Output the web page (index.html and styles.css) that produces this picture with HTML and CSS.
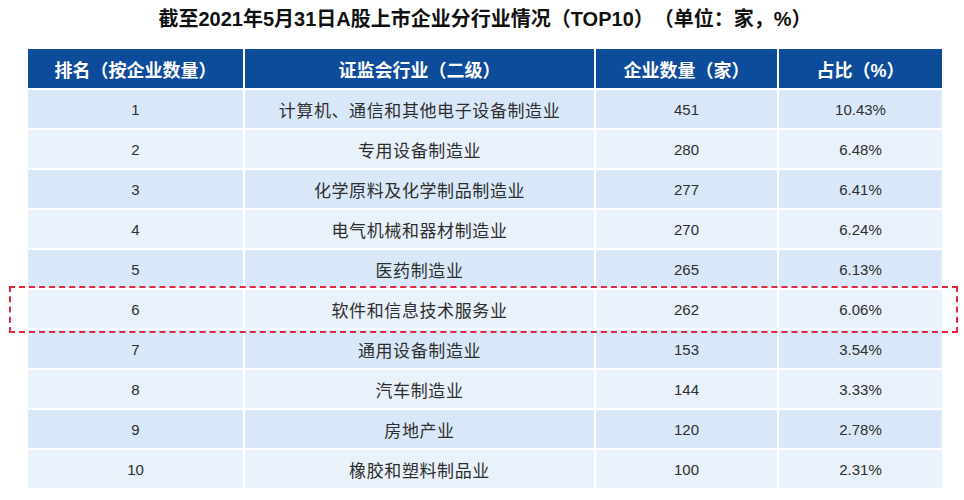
FILE: index.html
```html
<!DOCTYPE html>
<html lang="zh-CN">
<head>
<meta charset="utf-8">
<link rel="stylesheet" href="styles.css">
</head>
<body>
<div class="page">
  <h1 class="title">截至2021年5月31日A股上市企业分行业情况（TOP10）（单位：家，%）</h1>
  <table class="tbl">
    <colgroup>
      <col class="c1"><col class="c2"><col class="c3"><col class="c4">
    </colgroup>
    <thead>
      <tr><th>排名（按企业数量）</th><th>证监会行业（二级）</th><th>企业数量（家）</th><th>占比（%）</th></tr>
    </thead>
    <tbody>
      <tr><td class="num">1</td><td class="cn">计算机、通信和其他电子设备制造业</td><td class="num">451</td><td class="num">10.43%</td></tr>
      <tr><td class="num">2</td><td class="cn">专用设备制造业</td><td class="num">280</td><td class="num">6.48%</td></tr>
      <tr><td class="num">3</td><td class="cn">化学原料及化学制品制造业</td><td class="num">277</td><td class="num">6.41%</td></tr>
      <tr><td class="num">4</td><td class="cn">电气机械和器材制造业</td><td class="num">270</td><td class="num">6.24%</td></tr>
      <tr><td class="num">5</td><td class="cn">医药制造业</td><td class="num">265</td><td class="num">6.13%</td></tr>
      <tr><td class="num">6</td><td class="cn">软件和信息技术服务业</td><td class="num">262</td><td class="num">6.06%</td></tr>
      <tr><td class="num">7</td><td class="cn">通用设备制造业</td><td class="num">153</td><td class="num">3.54%</td></tr>
      <tr><td class="num">8</td><td class="cn">汽车制造业</td><td class="num">144</td><td class="num">3.33%</td></tr>
      <tr><td class="num">9</td><td class="cn">房地产业</td><td class="num">120</td><td class="num">2.78%</td></tr>
      <tr><td class="num">10</td><td class="cn">橡胶和塑料制品业</td><td class="num">100</td><td class="num">2.31%</td></tr>
    </tbody>
  </table>
  <div class="highlight"></div>
</div>
</body>
</html>
```
FILE: styles.css
```css
html, body {
  margin: 0;
  padding: 0;
  background: #ffffff;
}
body {
  font-family: "Liberation Sans", "Noto Sans CJK SC", sans-serif;
  color: #333333;
  text-spacing-trim: space-all;
}
.page {
  position: relative;
  width: 964px;
  height: 500px;
}
.title {
  margin: 0;
  height: 38px;
  line-height: 38px;
  text-align: center;
  font-size: 20px;
  font-weight: 700;
  color: #111111;
  padding-left: 6px;
}
.tbl {
  margin: 9px 0 0 26px;
  border-collapse: separate;
  border-spacing: 2px;
  table-layout: fixed;
  width: 918px;
}
.c1 { width: 215px; }
.c2 { width: 349px; }
.c3 { width: 181px; }
.c4 { width: 163px; }
.tbl th {
  height: 39px;
  padding: 0;
  background: #0d4c9a;
  color: #ffffff;
  font-size: 18px;
  font-weight: 700;
  text-align: center;
  vertical-align: middle;
}
.tbl td {
  height: 38px;
  padding: 0;
  text-align: center;
  vertical-align: middle;
}
.tbl tbody tr:nth-child(odd) td { background: #d9e8f8; }
.tbl tbody tr:nth-child(even) td { background: #e9f1fa; }
.num {
  font-size: 15px;
  color: #2e2e2e;
}
.cn {
  font-size: 17px;
  letter-spacing: 0.6px;
  color: #2e2e2e;
}
.highlight {
  position: absolute;
  left: 9px;
  top: 286px;
  width: 945px;
  height: 43px;
  border: 2px dashed #e1283f;
  pointer-events: none;
}
```
